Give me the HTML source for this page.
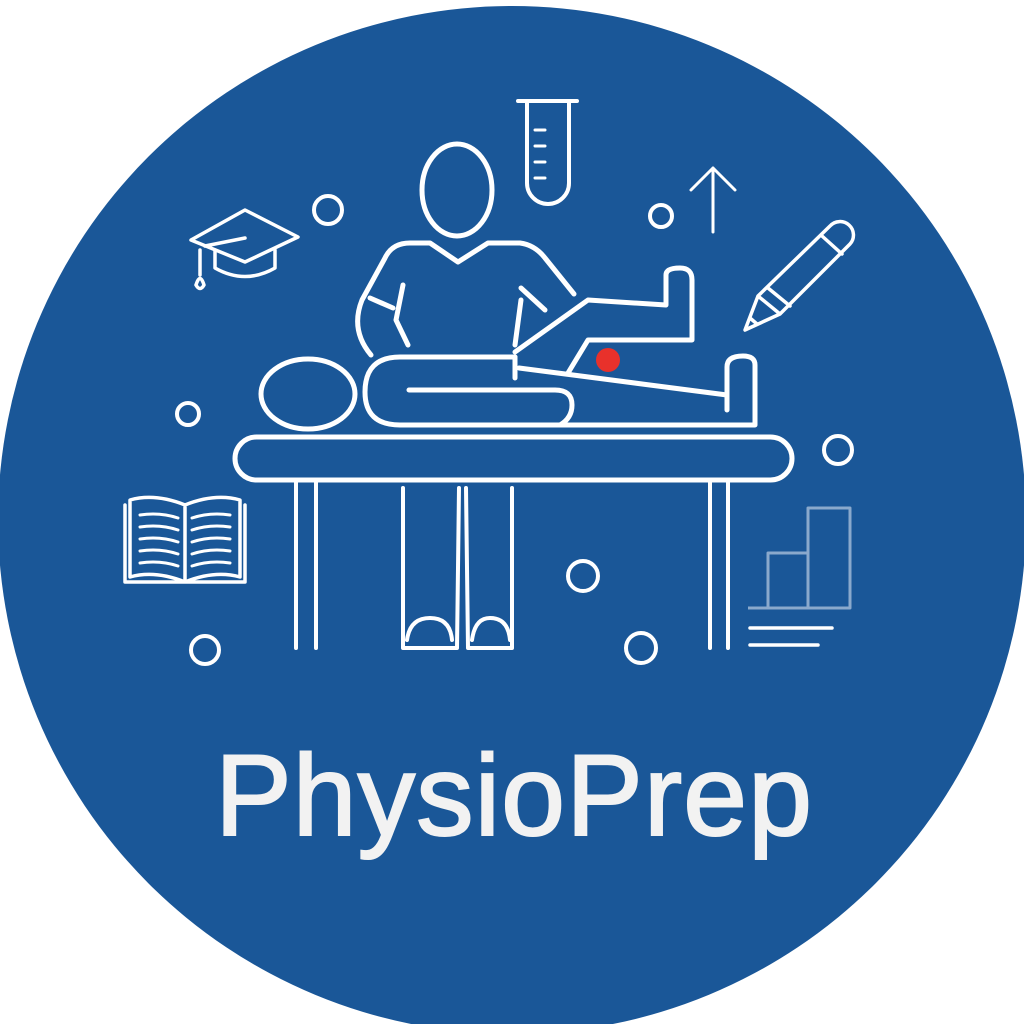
<!DOCTYPE html>
<html><head><meta charset="utf-8"><style>
html,body{margin:0;padding:0;background:#fff;width:1024px;height:1024px;overflow:hidden}
svg{display:block}
</style></head><body>
<svg width="1024" height="1024" viewBox="0 0 1024 1024" xmlns="http://www.w3.org/2000/svg">
<circle cx="512" cy="520" r="514" fill="#1a5798"/>
<g fill="none" stroke="#fff" stroke-width="5" stroke-linecap="round" stroke-linejoin="round">
<circle cx="328" cy="210" r="14" stroke-width="4"/>
<circle cx="661" cy="216" r="11" stroke-width="4"/>
<circle cx="188" cy="414" r="11" stroke-width="4"/>
<circle cx="838" cy="450" r="14" stroke-width="4"/>
<circle cx="583" cy="576" r="15" stroke-width="4"/>
<circle cx="205" cy="650" r="14" stroke-width="4"/>
<circle cx="641" cy="648" r="15" stroke-width="4"/>
<path d="M518 101 H577 M527 101 V183 A21 21 0 0 0 569 183 V101" stroke-width="4"/>
<path d="M535 130 H545 M535 146 H545 M535 162 H545 M535 178 H545" stroke-width="3"/>
<path d="M713 232 V168 M691 190 L713 168 L735 190" stroke-width="3"/>
<path d="M745 330 L758 296 L830 226 A10 10 0 0 1 850 244 L780 314 Z M758 296 L780 314 M768 288 L790 306 M822 236 L842 254 M750 318 L757 324" stroke-width="3.5"/>
<path d="M191 240 L245 210 L298 237 L245 262 Z" stroke-width="3.5"/>
<path d="M215 250 V268 Q245 285 275 268 V250" stroke-width="3.5"/>
<path d="M205 246 L245 238 M200 250 V275 M196 285 Q200 272 204 285 Q200 292 196 285" stroke-width="3.5"/>
<ellipse cx="457" cy="190" rx="35" ry="46"/>
<path d="M371 355 Q350 330 362 300 L385 258 Q392 243 410 243 L430 243 L458 262 L488 243 L520 243 Q535 245 545 258 L574 294"/>
<path d="M370 298 L393 308 M521 288 L545 310"/>
<path d="M403 285 L396 320 L408 345 M521 300 L515 345"/>
<ellipse cx="308" cy="394" rx="47" ry="35"/>
<path d="M515 357 H400 Q365 357 365 392 Q365 425 400 425 H755 V365 Q755 356 743 356 Q727 356 727 367 V410"/>
<path d="M409 390 H555 Q572 390 572 405 Q572 418 560 425"/>
<path d="M515 357 V378 M515 352 L588 300 L666 305 V275 Q666 268 680 268 Q692 268 692 280 V340 H588 L568 373 M519 368 L727 395"/>
<rect x="235" y="437" width="557" height="43" rx="21.5"/>
<path d="M296 480 V648 M316 480 V648 M710 480 V648 M728 480 V648" stroke-width="4"/>
<path d="M403 488 V648 H457 L459 488 M466 488 L468 648 H512 V488" stroke-width="4"/>
<path d="M407 640 Q410 618 430 618 Q450 618 452 640 M472 640 Q475 618 490 618 Q508 618 510 640" stroke-width="4"/>
<path d="M125 505 V582 H245 V505 M130 500 Q155 493 185 505 Q215 493 240 500 V577 Q215 570 185 582 Q155 570 130 577 Z M185 505 V582" stroke-width="3.5"/>
<path d="M140 515 Q160 512 178 518 M140 527 Q160 524 178 530 M140 539 Q160 536 178 542 M140 551 Q160 548 178 554 M140 563 Q160 560 178 566 M192 518 Q210 512 230 515 M192 530 Q210 524 230 527 M192 542 Q210 536 230 539 M192 554 Q210 548 230 551 M192 566 Q210 560 230 563" stroke-width="3"/>
<g stroke="#8aa9cc" stroke-width="3" stroke-linecap="butt"><path d="M748 608 H850 V508 H808 V608 M768 608 V553 H808"/></g>
<path d="M750 628 H832 M750 645 H818" stroke-width="3.5"/>
</g>
<circle cx="608" cy="360" r="12" fill="#e8312b"/>
<text x="514" y="835" text-anchor="middle" font-family="Liberation Sans, sans-serif" font-size="115" fill="#f2f2f2" stroke="#f2f2f2" stroke-width="2" letter-spacing="1">PhysioPrep</text>
</svg>
</body></html>
